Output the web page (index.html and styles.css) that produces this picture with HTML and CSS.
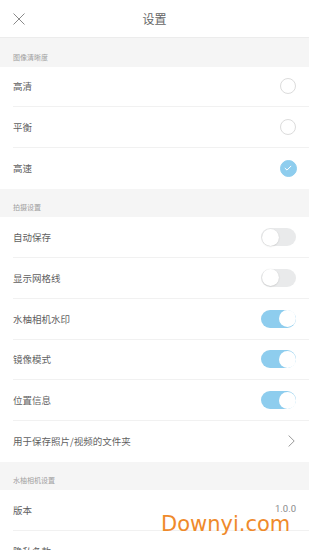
FILE: index.html
```html
<!DOCTYPE html>
<html lang="zh">
<head>
<meta charset="utf-8">
<link rel="stylesheet" href="styles.css">
</head>
<body>
<div class="page">
  <header class="topbar">
    <svg class="close" width="12" height="12" viewBox="0 0 12 12"><path d="M0.5 0.5L11.5 11.5M11.5 0.5L0.5 11.5" stroke="#8a8a8a" stroke-width="1" fill="none"/></svg>
    <div class="title">设置</div>
  </header>

  <div class="section">图像清晰度</div>
  <div class="group">
    <div class="row"><span class="label">高清</span><span class="radio"></span></div>
    <div class="row"><span class="label">平衡</span><span class="radio"></span></div>
    <div class="row"><span class="label">高速</span><span class="radio on"><svg width="8" height="6" viewBox="0 0 8 6"><path d="M0.8 3L3 5.1L7.2 0.9" stroke="#fff" stroke-width="1" fill="none"/></svg></span></div>
  </div>

  <div class="section">拍摄设置</div>
  <div class="group">
    <div class="row"><span class="label">自动保存</span><span class="toggle"><span class="knob"></span></span></div>
    <div class="row"><span class="label">显示网格线</span><span class="toggle"><span class="knob"></span></span></div>
    <div class="row"><span class="label">水柚相机水印</span><span class="toggle on"><span class="knob"></span></span></div>
    <div class="row"><span class="label">镜像模式</span><span class="toggle on"><span class="knob"></span></span></div>
    <div class="row"><span class="label">位置信息</span><span class="toggle on"><span class="knob"></span></span></div>
    <div class="row"><span class="label">用于保存照片/视频的文件夹</span><svg class="chev" width="7" height="12" viewBox="0 0 7 12"><path d="M0.6 0.5L6.2 6L0.6 11.5" stroke="#9a9a9a" stroke-width="1" fill="none"/></svg></div>
  </div>

  <div class="section">水柚相机设置</div>
  <div class="group">
    <div class="row"><span class="label">版本</span><span class="value">1.0.0</span></div>
    <div class="row"><span class="label">隐私条款</span></div>
  </div>

  <div class="watermark">Downyi.com</div>
</div>
</body>
</html>
```

FILE: styles.css
```css
* { box-sizing: border-box; }
html, body { margin: 0; padding: 0; background: #fff; }
body {
  font-family: "Noto Sans CJK SC", "Noto Sans", sans-serif;
  width: 309px;
  height: 550px;
  overflow: hidden;
}
.page { position: relative; width: 309px; }
.topbar {
  height: 38px;
  border-bottom: 1px solid #ececec;
  display: flex;
  align-items: center;
  justify-content: center;
  position: relative;
}
.close { position: absolute; left: 13px; top: 13px; }
.title { font-size: 12px; color: #666; line-height: 1; margin-top: 1px; }
.section {
  height: 28.5px;
  background: #f5f5f5;
  font-size: 7px;
  color: #a0a0a0;
  padding: 0 13px 6px;
  display: flex;
  align-items: flex-end;
  line-height: 1;
}
.group { padding-left: 13px; }
.row {
  height: 40.75px;
  display: flex;
  align-items: center;
  justify-content: space-between;
  padding-right: 13px;
  border-bottom: 1px solid #f1f1f1;
}
.group .row:last-child { border-bottom: none; }
.label { font-size: 9.5px; color: #5f5f5f; }
.radio {
  width: 16px;
  height: 16px;
  border-radius: 50%;
  border: 1px solid #dcdcdc;
  display: flex;
  align-items: center;
  justify-content: center;
}
.radio.on { background: #8ecdee; border-color: #8ecdee; width: 17px; height: 17px; margin-right: -0.5px; }
.toggle {
  width: 35px;
  height: 18px;
  border-radius: 9px;
  background: #e9eaeb;
  position: relative;
  display: flex;
  align-items: center;
  padding: 0.5px;
}
.toggle .knob {
  width: 17px;
  height: 17px;
  border-radius: 50%;
  background: #fff;
  box-shadow: 0 0.5px 1.5px rgba(0,0,0,0.18);
}
.toggle.on { background: #8ecdee; justify-content: flex-end; }
.toggle.on .knob { box-shadow: none; }
.chev { margin-right: 1px; }
.value { font-size: 9.5px; color: #8a8a8a; font-family: "Roboto", "Noto Sans", sans-serif; margin-bottom: 3px; }
.watermark {
  position: absolute;
  left: 161px;
  top: 512px;
  font-family: "DejaVu Sans", sans-serif;
  font-size: 21px;
  color: #ef8a2b;
  line-height: 1.2;
}
```
